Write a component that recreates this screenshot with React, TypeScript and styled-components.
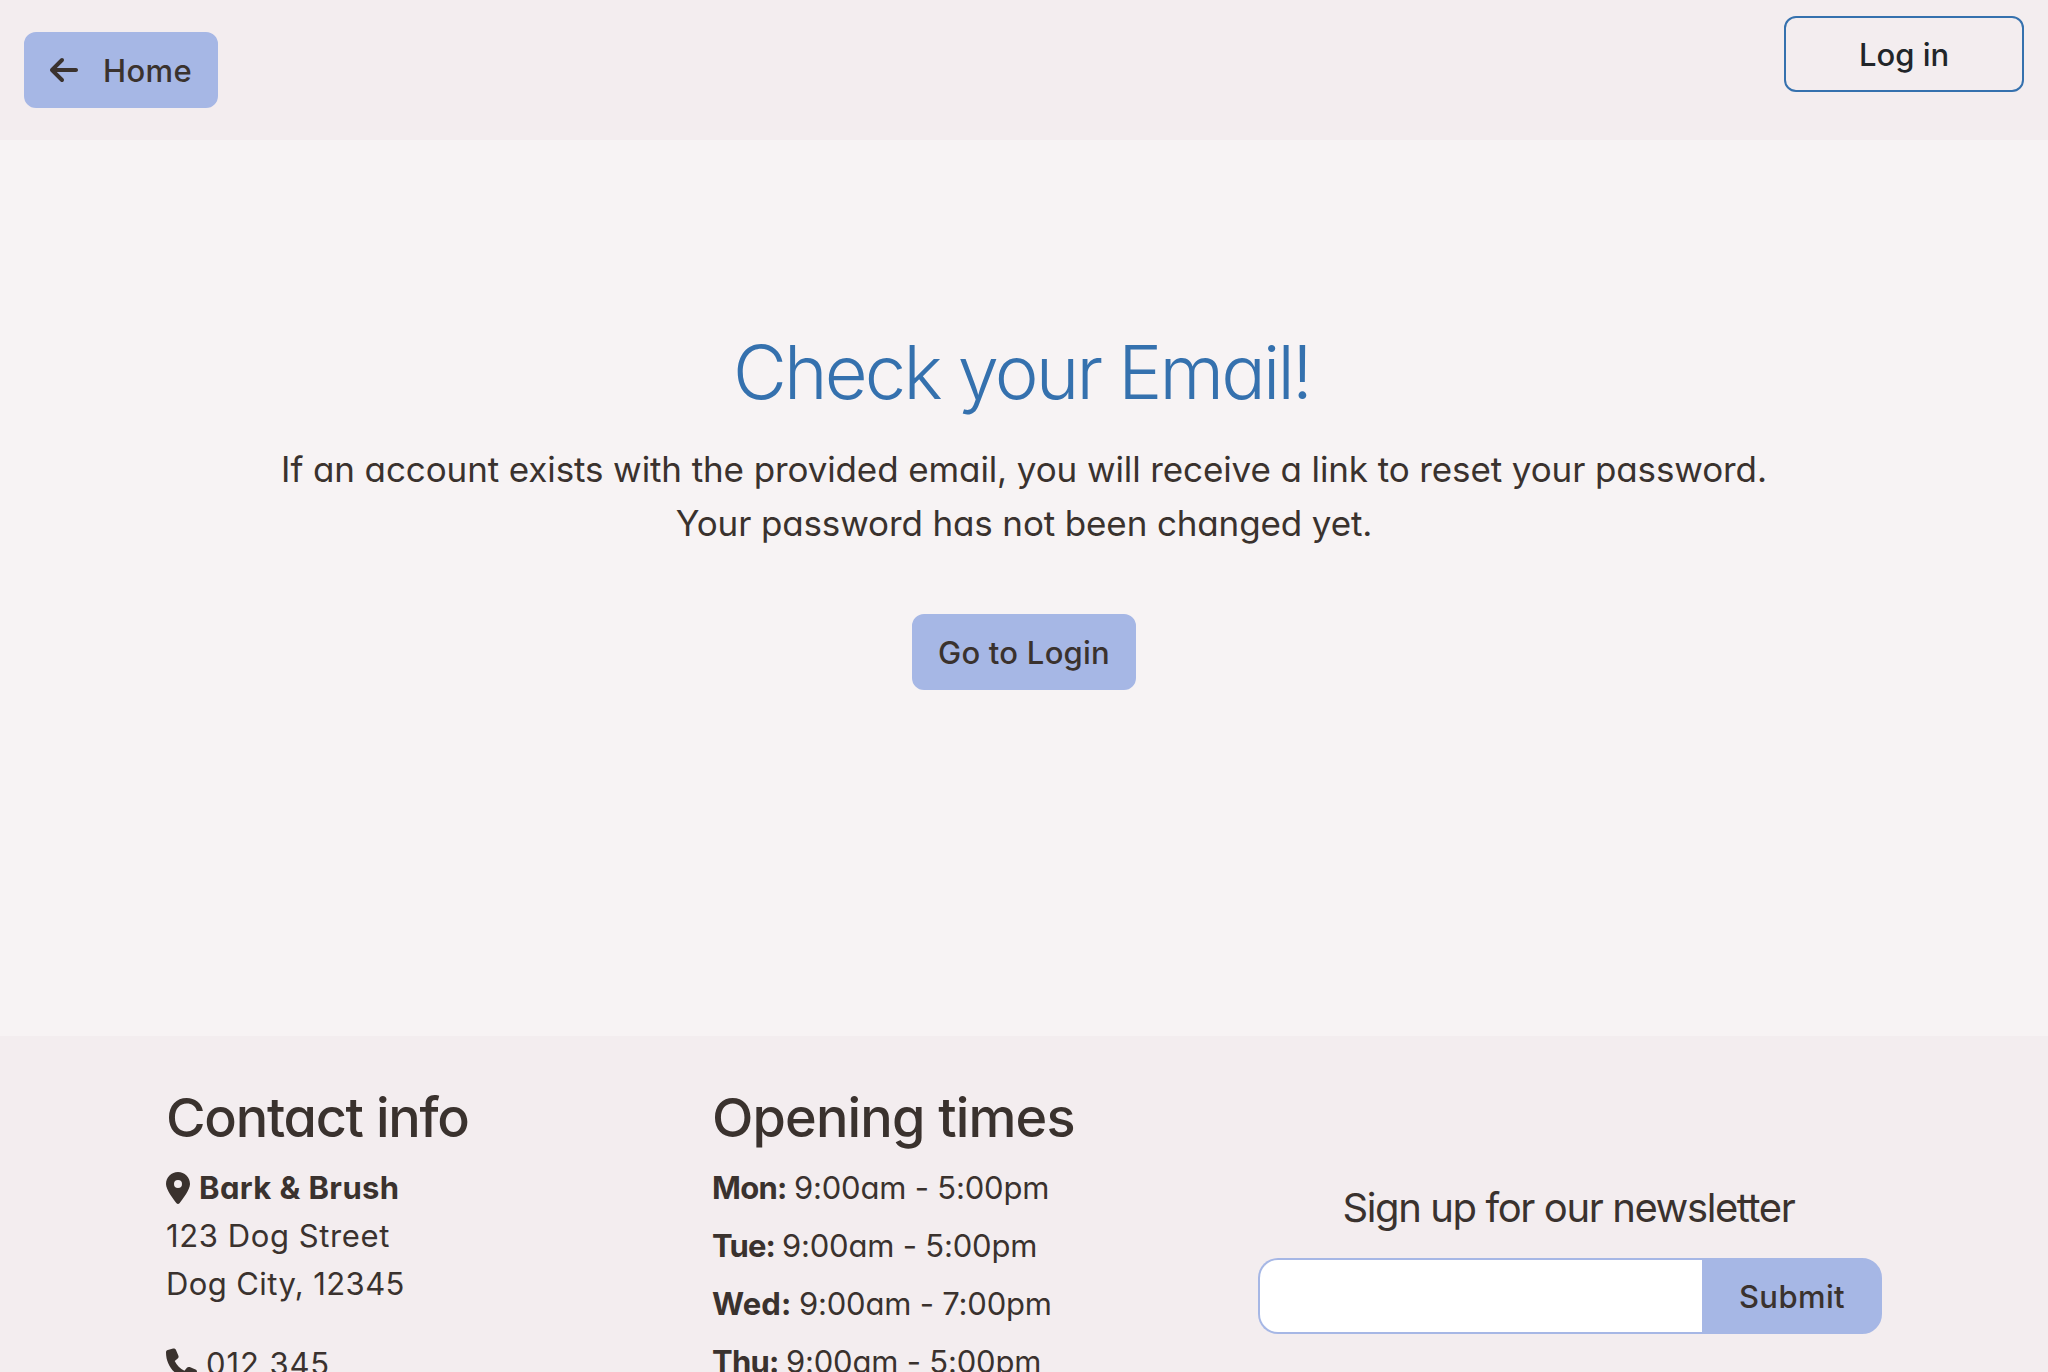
import React from "react";
import styled, { createGlobalStyle } from "styled-components";
import { FaArrowLeft, FaLocationDot, FaPhone } from "react-icons/fa6";

const ink = "#3a322e";
const blue = "#3571ae";
const periwinkle = "#a6b7e5";

const GlobalStyle = createGlobalStyle`
  *, *::before, *::after { box-sizing: border-box; }
  body {
    margin: 0;
    overflow: hidden;
    background: #f7f3f4;
    color: ${ink};
    font-family: Inter, "Open Sans", sans-serif;
    font-feature-settings: "cv11", "calt" 0;
    font-size: 31px;
    line-height: 48px;
  }
  h1, h2, h3, p { margin: 0; }
`;

const Page = styled.div`
  height: 1372px;
  overflow: hidden;
  display: flex;
  flex-direction: column;
`;

const Header = styled.header`
  flex: none;
  height: 140px;
  padding: 16px 24px;
  display: flex;
  justify-content: space-between;
  align-items: flex-start;
  background: #f3edef;
`;

const Button = styled.button<{ $width: number; $outline?: boolean }>`
  width: ${(p) => p.$width}px;
  height: 76px;
  display: flex;
  align-items: center;
  justify-content: center;
  padding: 2px 0 0;
  border: 2px solid ${(p) => (p.$outline ? blue : periwinkle)};
  border-radius: 12px;
  background: ${(p) => (p.$outline ? "transparent" : periwinkle)};
  color: ${(p) => (p.$outline ? "#212529" : ink)};
  font: inherit;
  font-weight: 500;
  white-space: nowrap;
`;

const HomeButton = styled(Button)`
  margin-top: 16px;
  justify-content: flex-start;
  padding-left: 22px;
  gap: 23px;

  svg { width: 32px; height: 32px; margin-top: -2px; }
`;

const Label = styled.span<{ $tracking: number }>`
  letter-spacing: ${(p) => p.$tracking}px;
`;

const Main = styled.main`
  flex: none;
  height: 896px;
  padding-top: 188px;
  display: flex;
  flex-direction: column;
  align-items: center;
`;

const Title = styled.h1`
  padding-right: 5px;
  color: ${blue};
  font-size: 74px;
  font-weight: 300;
  line-height: 88px;
  letter-spacing: -2.8px;
  white-space: nowrap;
`;

const Message = styled.p`
  margin: 26px 0 64px;
  font-size: 35px;
  line-height: 54px;
  text-align: center;
  white-space: nowrap;
`;

const Footer = styled.footer`
  flex: none;
  height: 600px;
  padding: 48px 166px 0;
  display: grid;
  grid-template-columns: 546px 546px 624px;
  background: #f3edef;
`;

const Column = styled.section`
  white-space: nowrap;
`;

const FooterHeading = styled.h2<{ $tracking: number }>`
  margin-bottom: 13px;
  font-size: 54px;
  font-weight: 500;
  line-height: 67px;
  letter-spacing: ${(p) => p.$tracking}px;
`;

const ContactLine = styled.div<{ $gap?: number; $spaced?: boolean }>`
  height: 48px;
  margin-top: ${(p) => (p.$spaced ? 32 : 0)}px;
  display: flex;
  align-items: center;
  gap: ${(p) => p.$gap ?? 0}px;

  svg { height: 32px; }
`;

const PinIcon = styled(FaLocationDot)`
  width: 24px;
`;

const Strong = styled.strong<{ $width?: number }>`
  display: inline-block;
  width: ${(p) => (p.$width ? `${p.$width}px` : "auto")};
  font-weight: 700;
`;

const HourRow = styled.div`
  height: 58px;
  display: flex;
`;

const Newsletter = styled.section`
  padding-top: 100px;
`;

const NewsletterTitle = styled.h3`
  margin-bottom: 26px;
  padding-right: 3px;
  font-size: 40px;
  font-weight: 400;
  line-height: 48px;
  letter-spacing: -1.4px;
  text-align: center;
  white-space: nowrap;
`;

const SignupForm = styled.form`
  display: flex;
  height: 76px;
`;

const EmailInput = styled.input`
  width: 444px;
  border: 2px solid ${periwinkle};
  border-right: 0;
  border-radius: 20px 0 0 20px;
  background: #fff;
  outline: none;
`;

const SubmitButton = styled(Button)`
  border-radius: 0 20px 20px 0;
`;

const hours = [
  { day: "Mon:", time: "9:00am - 5:00pm", width: 82, tracking: -0.7 },
  { day: "Tue:", time: "9:00am - 5:00pm", width: 70, tracking: -0.9 },
  { day: "Wed:", time: "9:00am - 7:00pm", width: 87, tracking: 0.1 },
  { day: "Thu:", time: "9:00am - 5:00pm", width: 74, tracking: -0.8 },
];

export default function App() {
  return (
    <Page>
      <GlobalStyle />
      <Header>
        <HomeButton $width={194}>
          <FaArrowLeft />
          <Label $tracking={0.4}>Home</Label>
        </HomeButton>
        <Button $width={240} $outline>
          <Label $tracking={0}>Log in</Label>
        </Button>
      </Header>
      <Main>
        <Title>Check your Email!</Title>
        <Message>
          <Label $tracking={-0.11}>
            If an account exists with the provided email, you will receive a link to reset your password.
          </Label>
          <br />
          <Label $tracking={-0.13}>Your password has not been changed yet.</Label>
        </Message>
        <Button $width={224}>
          <Label $tracking={0.25}>Go to Login</Label>
        </Button>
      </Main>
      <Footer>
        <Column>
          <FooterHeading $tracking={-1.25}>Contact info</FooterHeading>
          <ContactLine $gap={9}>
            <PinIcon />
            <Strong>
              <Label $tracking={0.4}>Bark &amp; Brush</Label>
            </Strong>
          </ContactLine>
          <ContactLine>
            <Label $tracking={0.6}>123 Dog Street</Label>
          </ContactLine>
          <ContactLine>
            <Label $tracking={0.4}>Dog City, 12345</Label>
          </ContactLine>
          <ContactLine $gap={9} $spaced>
            <FaPhone />
            <Label $tracking={0.9}>012 345</Label>
          </ContactLine>
        </Column>
        <Column>
          <FooterHeading $tracking={-0.85}>Opening times</FooterHeading>
          {hours.map((h) => (
            <HourRow key={h.day}>
              <Strong $width={h.width}>
                <Label $tracking={h.tracking}>{h.day}</Label>
              </Strong>
              <Label $tracking={-0.2}>{h.time}</Label>
            </HourRow>
          ))}
        </Column>
        <Newsletter>
          <NewsletterTitle>Sign up for our newsletter</NewsletterTitle>
          <SignupForm>
            <EmailInput type="email" aria-label="Email" />
            <SubmitButton $width={180} type="button">
              <Label $tracking={0.4}>Submit</Label>
            </SubmitButton>
          </SignupForm>
        </Newsletter>
      </Footer>
    </Page>
  );
}
